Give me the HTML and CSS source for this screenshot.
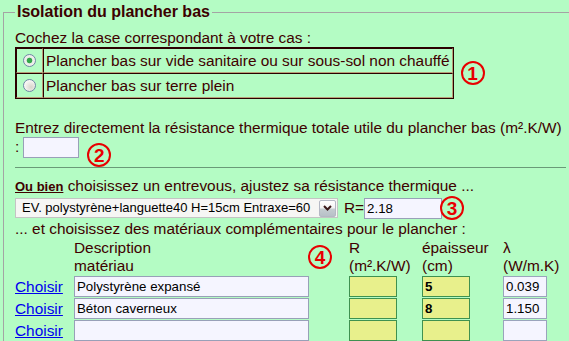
FILE: index.html
```html
<!DOCTYPE html>
<html lang="fr">
<head>
<meta charset="utf-8">
<title>Isolation du plancher bas</title>
<link rel="stylesheet" href="styles.css">
</head>
<body>
<fieldset class="panel">
  <legend class="panel-title">Isolation du plancher bas</legend>
  <p class="line">Cochez la case correspondant à votre cas :</p>
  <div class="cases-row">
    <table class="cases">
      <tr>
        <td class="case-radio"><input type="radio" name="cas" class="radio" checked></td>
        <td class="case-label">Plancher bas sur vide sanitaire ou sur sous-sol non chauffé</td>
      </tr>
      <tr>
        <td class="case-radio"><input type="radio" name="cas" class="radio"></td>
        <td class="case-label">Plancher bas sur terre plein</td>
      </tr>
    </table>
    <span class="num">1</span>
  </div>
  <p class="line direct">Entrez directement la résistance thermique totale utile du plancher bas (m².K/W)</p>
  <div class="direct-row">
    <span class="colon">:</span>
    <input type="text" class="field field-r">
    <span class="num num-2">2</span>
  </div>
  <hr class="sep">
  <p class="line"><b class="or">Ou bien</b> choisissez un entrevous, ajustez sa résistance thermique ...</p>
  <div class="ev-row">
    <div class="select">
      <span class="select-value">EV. polystyrène+languette40 H=15cm Entraxe=60</span>
      <span class="select-btn"><svg width="9" height="6" viewBox="0 0 9 6"><path d="M1 1 L4.5 4.5 L8 1" fill="none" stroke="#3a1a1a" stroke-width="2"/></svg></span>
    </div>
    <span class="r-label">R=</span>
    <input type="text" class="field field-ev" value="2.18">
    <span class="num num-3">3</span>
  </div>
  <p class="line">... et choisissez des matériaux complémentaires pour le plancher :</p>
  <div class="mat">
    <div></div>
    <div class="mat-head desc-head"><span>Description<br>matériau</span><span class="num">4</span></div>
    <div class="mat-head">R<br>(m².K/W)</div>
    <div class="mat-head">épaisseur<br>(cm)</div>
    <div class="mat-head">λ<br>(W/m.K)</div>

    <a href="#" class="choose">Choisir</a>
    <input type="text" class="field field-desc" value="Polystyrène expansé">
    <input type="text" class="field field-y">
    <input type="text" class="field field-y field-bold" value="5">
    <input type="text" class="field field-l" value="0.039">

    <a href="#" class="choose">Choisir</a>
    <input type="text" class="field field-desc" value="Béton caverneux">
    <input type="text" class="field field-y">
    <input type="text" class="field field-y field-bold" value="8">
    <input type="text" class="field field-l" value="1.150">

    <a href="#" class="choose">Choisir</a>
    <input type="text" class="field field-desc">
    <input type="text" class="field field-y">
    <input type="text" class="field field-y field-bold">
    <input type="text" class="field field-l">
  </div>
</fieldset>
</body>
</html>
```
FILE: styles.css
```css
html {
  overflow: hidden;
  background: #b4fcc4;
}
body {
  margin: 0;
  font-family: "Liberation Sans", Arial, sans-serif;
  font-size: 15.4px;
  line-height: 18px;
  color: #400000;
}
.panel {
  margin: 3px 0 0 3px;
  width: 551px;
  padding: 8px 11px 10px 11px;
  border: 1px solid #a4a4a4;
}
.panel-title {
  padding: 0 2px;
  font-weight: bold;
  font-size: 16px;
  line-height: 18px;
  color: #3c0000;
}
.line {
  margin: 0;
}
.cases-row {
  display: flex;
  align-items: center;
  gap: 7px;
}
.cases {
  border-collapse: separate;
  border-spacing: 0;
  border: 1px solid #2b0000;
}
.cases td {
  border: 1px solid;
  border-color: #2b0000 #b8a078 #b8a078 #2b0000;
  padding: 2px 2px;
  height: 19px;
  line-height: 19px;
}
.cases td.case-radio {
  width: 25px;
  padding: 2px 0;
  text-align: center;
}
.radio {
  -webkit-appearance: none;
  appearance: none;
  display: block;
  margin: 0 auto;
  width: 13px;
  height: 13px;
  box-sizing: border-box;
  border: 1px solid #6f86a6;
  border-radius: 50%;
  background: radial-gradient(circle at 65% 65%, #d8d4cc 0, #f6f4f0 60%, #ffffff 100%);
}
.radio:checked {
  background: radial-gradient(circle, #34a84a 0 2.4px, #e8eee8 3.2px, #f2f0ec 70%, #d8d4cc 100%);
}
.num {
  display: inline-flex;
  align-items: center;
  justify-content: center;
  box-sizing: border-box;
  width: 24px;
  height: 24px;
  flex: none;
  border: 2.5px solid #e80000;
  border-radius: 50%;
  color: #e80000;
  font-weight: bold;
  font-size: 19px;
  line-height: 1;
}
.direct {
  margin-top: 20px;
}
.direct-row {
  display: flex;
  align-items: flex-start;
}
.colon {
  line-height: 18px;
  margin-top: 1px;
}
.field {
  box-sizing: border-box;
  height: 21px;
  margin: 0;
  padding: 0 2px;
  font-family: "Liberation Sans", Arial, sans-serif;
  font-size: 13.3px;
  color: #000;
  border: 1px solid #98a0b8;
  background: #f5f5ff;
  outline: none;
}
.field-r {
  width: 56px;
  margin-left: 4px;
}
.num-2 {
  margin-left: 8px;
  margin-top: 6px;
}
.sep {
  margin: 0 0 9px;
  height: 0;
  border: 0;
  border-top: 1px solid #6a9a78;
}
.or {
  font-size: 13px;
  text-decoration: underline;
}
.ev-row {
  display: flex;
  align-items: center;
}
.select {
  display: flex;
  align-items: center;
  box-sizing: border-box;
  width: 323px;
  height: 20px;
  padding: 0 1px;
  border: 1px solid #c4c4c4;
  background: #f6f6f4;
}
.select-value {
  flex: 1;
  padding-left: 5px;
  font-size: 13px;
  line-height: 18px;
  color: #000;
  white-space: nowrap;
  overflow: hidden;
}
.select-btn {
  display: flex;
  justify-content: center;
  align-items: flex-start;
  box-sizing: border-box;
  width: 17px;
  height: 17px;
  padding-top: 4px;
  border: 1px solid #b4b8c4;
  border-radius: 2px;
  background: linear-gradient(#ffffff 0, #f4f4f4 45%, #c4ccd0 55%, #b8c0c8 100%);
}
.r-label {
  margin-left: 6px;
}
.field-ev {
  width: 78px;
}
.num-3 {
  margin-left: -2px;
}
.mat {
  display: grid;
  grid-template-columns: 59px 275px 73px 81px 63px;
  align-items: center;
  row-gap: 1px;
  margin-top: 1px;
}
.desc-head {
  display: flex;
  align-items: center;
  justify-content: space-between;
  padding-right: 17px;
}
.choose {
  color: #0000ee;
  text-decoration: underline;
}
.field-desc {
  width: 235px;
}
.field-y {
  width: 48px;
  background: #e8f08c;
  border-color: #3f9150;
}
.field-bold {
  font-weight: bold;
}
.field-l {
  width: 44px;
  border-color: #9aa4bc;
}
```
